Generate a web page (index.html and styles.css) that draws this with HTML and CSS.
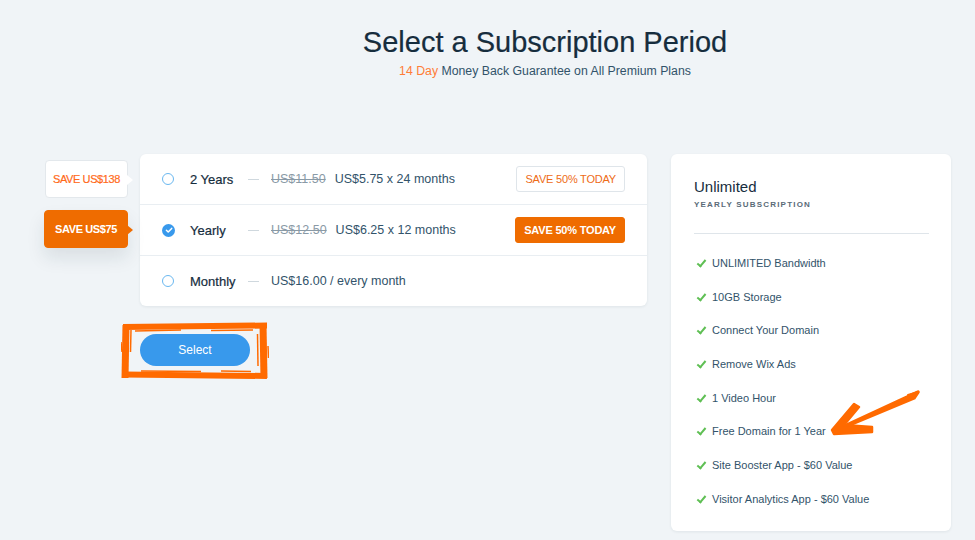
FILE: index.html
```html
<!DOCTYPE html>
<html lang="en">
<head>
  <meta charset="UTF-8">
  <meta name="viewport" content="width=device-width, initial-scale=1.0">
  <title>Select a Subscription Period</title>
  <link rel="stylesheet" href="styles.css">
</head>
<body>
  <header class="page-head">
    <h1>Select a Subscription Period</h1>
    <p><span class="accent">14 Day</span> Money Back Guarantee on All Premium Plans</p>
  </header>

  <main class="layout">
    <!-- Period picker -->
    <section class="picker">
      <div class="periods">
        <div class="period">
          <span class="save-tag">SAVE US$138</span>
          <span class="radio"></span>
          <span class="period-name">2 Years</span>
          <span class="dash"></span>
          <span class="old-price">US$11.50</span>
          <span class="price">US$5.75 x 24 months</span>
          <span class="today">SAVE 50% TODAY</span>
        </div>
        <div class="period active">
          <span class="save-tag">SAVE US$75</span>
          <span class="radio">
            <svg viewBox="0 0 12 12" width="12" height="12"><path d="M3.4 6.2l1.8 1.8 3.5-3.6" fill="none" stroke="#fff" stroke-width="1.5" stroke-linecap="round" stroke-linejoin="round"/></svg>
          </span>
          <span class="period-name">Yearly</span>
          <span class="dash"></span>
          <span class="old-price">US$12.50</span>
          <span class="price">US$6.25 x 12 months</span>
          <span class="today">SAVE 50% TODAY</span>
        </div>
        <div class="period">
          <span class="radio"></span>
          <span class="period-name">Monthly</span>
          <span class="dash"></span>
          <span class="price">US$16.00 / every month</span>
        </div>
      </div>

      <div class="select-wrap">
        <button class="select-btn">Select</button>
        <!-- hand drawn highlight -->
        <svg class="brush-box" viewBox="0 0 148 58" width="148" height="58">
          <g fill="none" stroke="#ff6a00" stroke-linecap="butt">
            <path d="M2 5 L146 3.5" stroke-width="6"/>
            <path d="M14 9 L60 8 M90 8.5 L132 8" stroke-width="1.5"/>
            <path d="M3 52.5 L146 54" stroke-width="6"/>
            <path d="M20 49 L80 49.5 M100 49 L130 49.5" stroke-width="1.5"/>
            <path d="M5 3 L4 56" stroke-width="7"/>
            <path d="M10 8 L9.5 30" stroke-width="1.5"/>
            <path d="M142 2 L143 56" stroke-width="7"/>
            <path d="M136.5 12 L137 44" stroke-width="1.5"/>
            <path d="M0 20 L1 30 M147 24 L147.5 36" stroke-width="1.5"/>
          </g>
        </svg>
      </div>
    </section>

    <!-- Plan summary -->
    <aside class="summary">
      <h2>Unlimited</h2>
      <div class="plan-type">YEARLY SUBSCRIPTION</div>
      <ul class="features">
        <li>UNLIMITED Bandwidth</li>
        <li>10GB Storage</li>
        <li>Connect Your Domain</li>
        <li>Remove Wix Ads</li>
        <li>1 Video Hour</li>
        <li>Free Domain for 1 Year</li>
        <li>Site Booster App - $60 Value</li>
        <li>Visitor Analytics App - $60 Value</li>
      </ul>
      <svg class="arrow" viewBox="0 0 92 48" width="92" height="48">
        <g fill="#ff6a00" stroke="#ff6a00" stroke-linecap="round" stroke-linejoin="round">
          <path d="M90 2 L86 8 L14 38 L8 40 Z" stroke-width="3.5"/>
          <path d="M80 5 L90 2" fill="none" stroke-width="2"/>
          <path d="M26 14 L31 17 L16 35 L44 37 L44 42 L6 44 L4 40 Z" stroke-width="2.5"/>
        </g>
      </svg>
    </aside>
  </main>
</body>
</html>
```

FILE: styles.css
```css
/* General */
body {
  margin: 0;
  background-color: #f0f4f7;
  font-family: 'Liberation Sans', Arial, sans-serif;
  color: #20303c;
  height: 540px;
  overflow: hidden;
}

/* Heading */
.page-head {
  text-align: center;
  padding-top: 25px;
  padding-left: 115px;
}

.page-head h1 {
  margin: 0;
  font-size: 29px;
  font-weight: normal;
  color: #162d3d;
  line-height: 34px;
  -webkit-text-stroke: 0.2px #162d3d;
}

.page-head p {
  margin: 5px 0 0;
  font-size: 12.3px;
  color: #32536a;
}

.accent {
  color: #ff7d38;
}

/* Layout */
.layout {
  display: flex;
  gap: 24px;
  padding: 76px 0 0 140px;
  align-items: flex-start;
}

/* Period list */
.picker {
  width: 507px;
}

.periods {
  background-color: #fff;
  border-radius: 6px;
  box-shadow: 0 1px 3px rgba(22, 45, 61, 0.08);
}

.period {
  position: relative;
  display: flex;
  align-items: center;
  height: 50px;
  padding: 0 22px;
  font-size: 13px;
  border-bottom: 1px solid #e9eef2;
}

.period:last-child {
  border-bottom: none;
}

.radio {
  width: 10px;
  height: 10px;
  border: 1.5px solid #6ab8f0;
  border-radius: 50%;
  display: flex;
  align-items: center;
  justify-content: center;
  flex-shrink: 0;
}

.period.active .radio {
  width: 13px;
  height: 13px;
  border: none;
  background-color: #3899ec;
}

.period-name {
  margin-left: 16px;
  width: 47px;
  color: #162d3d;
  -webkit-text-stroke: 0.2px #162d3d;
}

.period.active .period-name {
  margin-left: 15px;
}

.dash {
  width: 11px;
  height: 1px;
  background-color: #cfd8de;
  margin: 0 12px 0 11px;
}

.old-price {
  color: #8a9aa6;
  text-decoration: line-through;
  margin-right: 9px;
  font-size: 12.5px;
}

.price {
  color: #32536a;
  font-size: 12.5px;
}

.today {
  margin-left: auto;
  height: 24px;
  padding: 0 8px;
  display: flex;
  align-items: center;
  font-size: 11px;
  letter-spacing: -0.2px;
  color: #ee6b16;
  border: 1px solid #dfe5ea;
  border-radius: 3px;
}

.period.active .today {
  background-color: #ef6c00;
  border-color: #ef6c00;
  color: #fff;
  font-weight: bold;
}

/* Save badges beside the rows */
.save-tag {
  position: absolute;
  right: calc(100% + 12px);
  top: 6px;
  width: 83px;
  height: 38px;
  display: flex;
  align-items: center;
  justify-content: center;
  font-size: 11px;
  letter-spacing: -0.4px;
  color: #ff6a1a;
  -webkit-text-stroke: 0.2px #ff6a1a;
  background-color: #fff;
  border: 1px solid #e3e8ec;
  border-radius: 4px;
  box-sizing: border-box;
}

.save-tag::after {
  content: '';
  position: absolute;
  right: -6px;
  top: 14px;
  border-style: solid;
  border-width: 5px 0 5px 6px;
  border-color: transparent transparent transparent #fff;
}

.period.active .save-tag {
  top: 5px;
  width: 84px;
  background-color: #ef6c00;
  border-color: #ef6c00;
  color: #fff;
  -webkit-text-stroke: 0;
  font-weight: bold;
  box-shadow: 0 10px 18px rgba(22, 45, 61, 0.1);
}

.period.active .save-tag::after {
  border-left-color: #ef6c00;
}

/* Select button */
.select-wrap {
  position: relative;
  margin-top: 28px;
  width: 110px;
}

.select-btn {
  display: block;
  width: 110px;
  height: 32px;
  border: none;
  border-radius: 16px;
  background-color: #3899ec;
  color: #fff;
  font-family: inherit;
  font-size: 12px;
  cursor: pointer;
}

.brush-box {
  position: absolute;
  left: -19px;
  top: -12px;
}

/* Summary card */
.summary {
  position: relative;
  width: 235px;
  min-height: 342px;
  background-color: #fff;
  border-radius: 6px;
  padding: 24px 22px 4px 23px;
  box-shadow: 0 1px 3px rgba(22, 45, 61, 0.08);
}

.summary h2 {
  margin: 0;
  font-size: 15px;
  font-weight: normal;
  color: #162d3d;
}

.plan-type {
  margin-top: 5px;
  font-size: 8px;
  font-weight: bold;
  letter-spacing: 1.2px;
  color: #5a6b78;
  padding-bottom: 24px;
  border-bottom: 1px solid #dfe5ea;
}

.features {
  list-style: none;
  margin: 0;
  padding: 23px 0 0;
}

.features li {
  height: 33.7px;
  font-size: 11px;
  color: #32536a;
  padding-left: 18px;
  position: relative;
}

.features li::before {
  content: '';
  position: absolute;
  left: 5px;
  top: 1px;
  width: 3px;
  height: 7px;
  border: solid #5fbf54;
  border-width: 0 2px 2px 0;
  transform: rotate(40deg);
}

.arrow {
  position: absolute;
  left: 157px;
  top: 236px;
}
```
